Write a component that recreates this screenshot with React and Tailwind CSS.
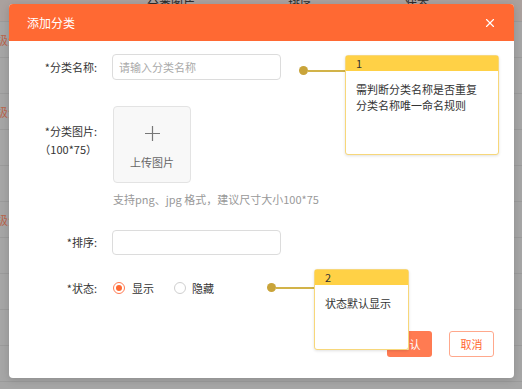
import { X } from 'lucide-react';

const rows = [
  { tag: '一级分类' },
  {},
  { tag: '一级分类' },
  {},
  {},
  { tag: '一级分类' },
  {},
  {},
  {},
  {},
];

function Note({ num, lines, className }) {
  return (
    <div className={`absolute flex flex-col rounded-[3px] border border-[#f7d77a] bg-white shadow-[0_1px_3px_rgba(0,0,0,0.12)] ${className}`}>
      <div className="flex h-[15px] items-center bg-[#ffd146] px-[10px] text-[11px] leading-none text-[#333]">{num}</div>
      <div className="px-[10px] pt-[10px] text-[11px] leading-[16px] text-[#333]">
        {lines.map(l => <div key={l}>{l}</div>)}
      </div>
    </div>
  );
}

function Pin({ className }) {
  return (
    <div className={`absolute flex items-center ${className}`}>
      <div className="h-[9px] w-[9px] shrink-0 rounded-full bg-[#c9a43a]" />
      <div className="h-[2px] flex-1 bg-[#d2b349]" />
    </div>
  );
}

function Label({ children }) {
  return <div className="w-[88px] shrink-0 text-right text-[11px] text-[#333]">{children}</div>;
}

export default function App() {
  return (
    <div className="relative h-[389px] w-[522px] overflow-hidden bg-[#a6a6a6] font-['Noto_Sans_CJK_SC',sans-serif]">
      {/* page behind the dialog, scrolled a little */}
      <div className="-mt-[14px]">
        <div className="flex h-[36px] items-center border-b border-[#9b9b9b] bg-[#aaa19e] text-[12px] text-[#2b2b2b]">
          <div className="w-[130px]" />
          <div className="w-[82px] text-center">分类图片</div>
          <div className="w-[176px] text-center">排序</div>
          <div className="w-[58px] text-center">状态</div>
        </div>
        {rows.map((r, i) => (
          <div key={i} className="flex h-[36px] items-center border-b border-[#9b9b9b] text-[12px]">
            <div className="-ml-[16px] text-[#b8674f]">{r.tag}</div>
          </div>
        ))}
      </div>

      {/* dialog */}
      <div className="absolute left-[9px] top-[4px] flex h-[374px] w-[505px] flex-col rounded-[4px] bg-white shadow-[0_2px_8px_rgba(0,0,0,0.15)]">
        <div className="flex h-[37px] shrink-0 items-center justify-between rounded-t-[4px] bg-[#ff6933] pl-[18px] pr-[17px] text-white">
          <span className="text-[12px]">添加分类</span>
          <X className="h-[14px] w-[14px]" strokeWidth={2} />
        </div>

        <div className="flex flex-col pt-[13px]">
          <div className="flex h-[26px] items-center">
            <Label>*分类名称:</Label>
            <input
              className="ml-[15px] h-[26px] w-[169px] rounded-[4px] border border-[#dcdcdc] px-[6px] text-[11px] outline-none placeholder:text-[#aaa]"
              placeholder="请输入分类名称"
            />
          </div>

          <div className="mt-[26px] flex">
            <div className="w-[88px] shrink-0 pt-[16px] text-right text-[11px] leading-[18px] text-[#333]">
              <div>*分类图片:</div>
              <div>（100*75）</div>
            </div>
            <div className="ml-[16px] flex h-[77px] w-[78px] flex-col items-center rounded-[4px] border border-[#e3e3e3] bg-[#f8f8f8] pt-[19px]">
              <svg width="15" height="15" viewBox="0 0 15 15" className="text-[#777]">
                <path d="M7.5 0v15M0 7.5h15" stroke="currentColor" strokeWidth="1.2" fill="none" />
              </svg>
              <span className="mt-[13px] text-[11px] text-[#666]">上传图片</span>
            </div>
          </div>
          <div className="ml-[104px] mt-[9px] text-[11px] leading-[14px] text-[#999]">支持png、jpg 格式，建议尺寸大小100*75</div>

          <div className="mt-[24px] flex h-[25px] items-center">
            <Label>*排序:</Label>
            <input className="ml-[15px] h-[25px] w-[169px] rounded-[4px] border border-[#dcdcdc] px-[6px] text-[11px] outline-none" />
          </div>

          <div className="mt-[23px] flex h-[20px] items-center">
            <Label>*状态:</Label>
            <div className="ml-[16px] flex items-center text-[11px] text-[#333]">
              <span className="flex h-[12px] w-[12px] items-center justify-center rounded-full border border-[#ff7b52]">
                <span className="h-[6px] w-[6px] rounded-full bg-[#ff6933]" />
              </span>
              <span className="ml-[7px]">显示</span>
              <span className="ml-[20px] h-[12px] w-[12px] rounded-full border border-[#cfcfcf]" />
              <span className="ml-[6px]">隐藏</span>
            </div>
          </div>

          <div className="mt-[33px] flex justify-end gap-[17px] pr-[20px]">
            <button className="h-[26px] w-[45px] rounded-[3px] bg-[#ff7b52] text-[11px] text-white">确认</button>
            <button className="h-[26px] w-[45px] rounded-[3px] border border-[#ffa88c] bg-white text-[11px] text-[#ff6933]">取消</button>
          </div>
        </div>
      </div>

      {/* annotations */}
      <Pin className="left-[299px] top-[66px] w-[47px]" />
      <Note num="1" lines={['需判断分类名称是否重复', '分类名称唯一命名规则']} className="left-[345px] top-[55px] h-[100px] w-[154px]" />
      <Pin className="left-[267px] top-[283px] w-[48px]" />
      <Note num="2" lines={['状态默认显示']} className="left-[314px] top-[269px] h-[81px] w-[95px]" />
    </div>
  );
}
